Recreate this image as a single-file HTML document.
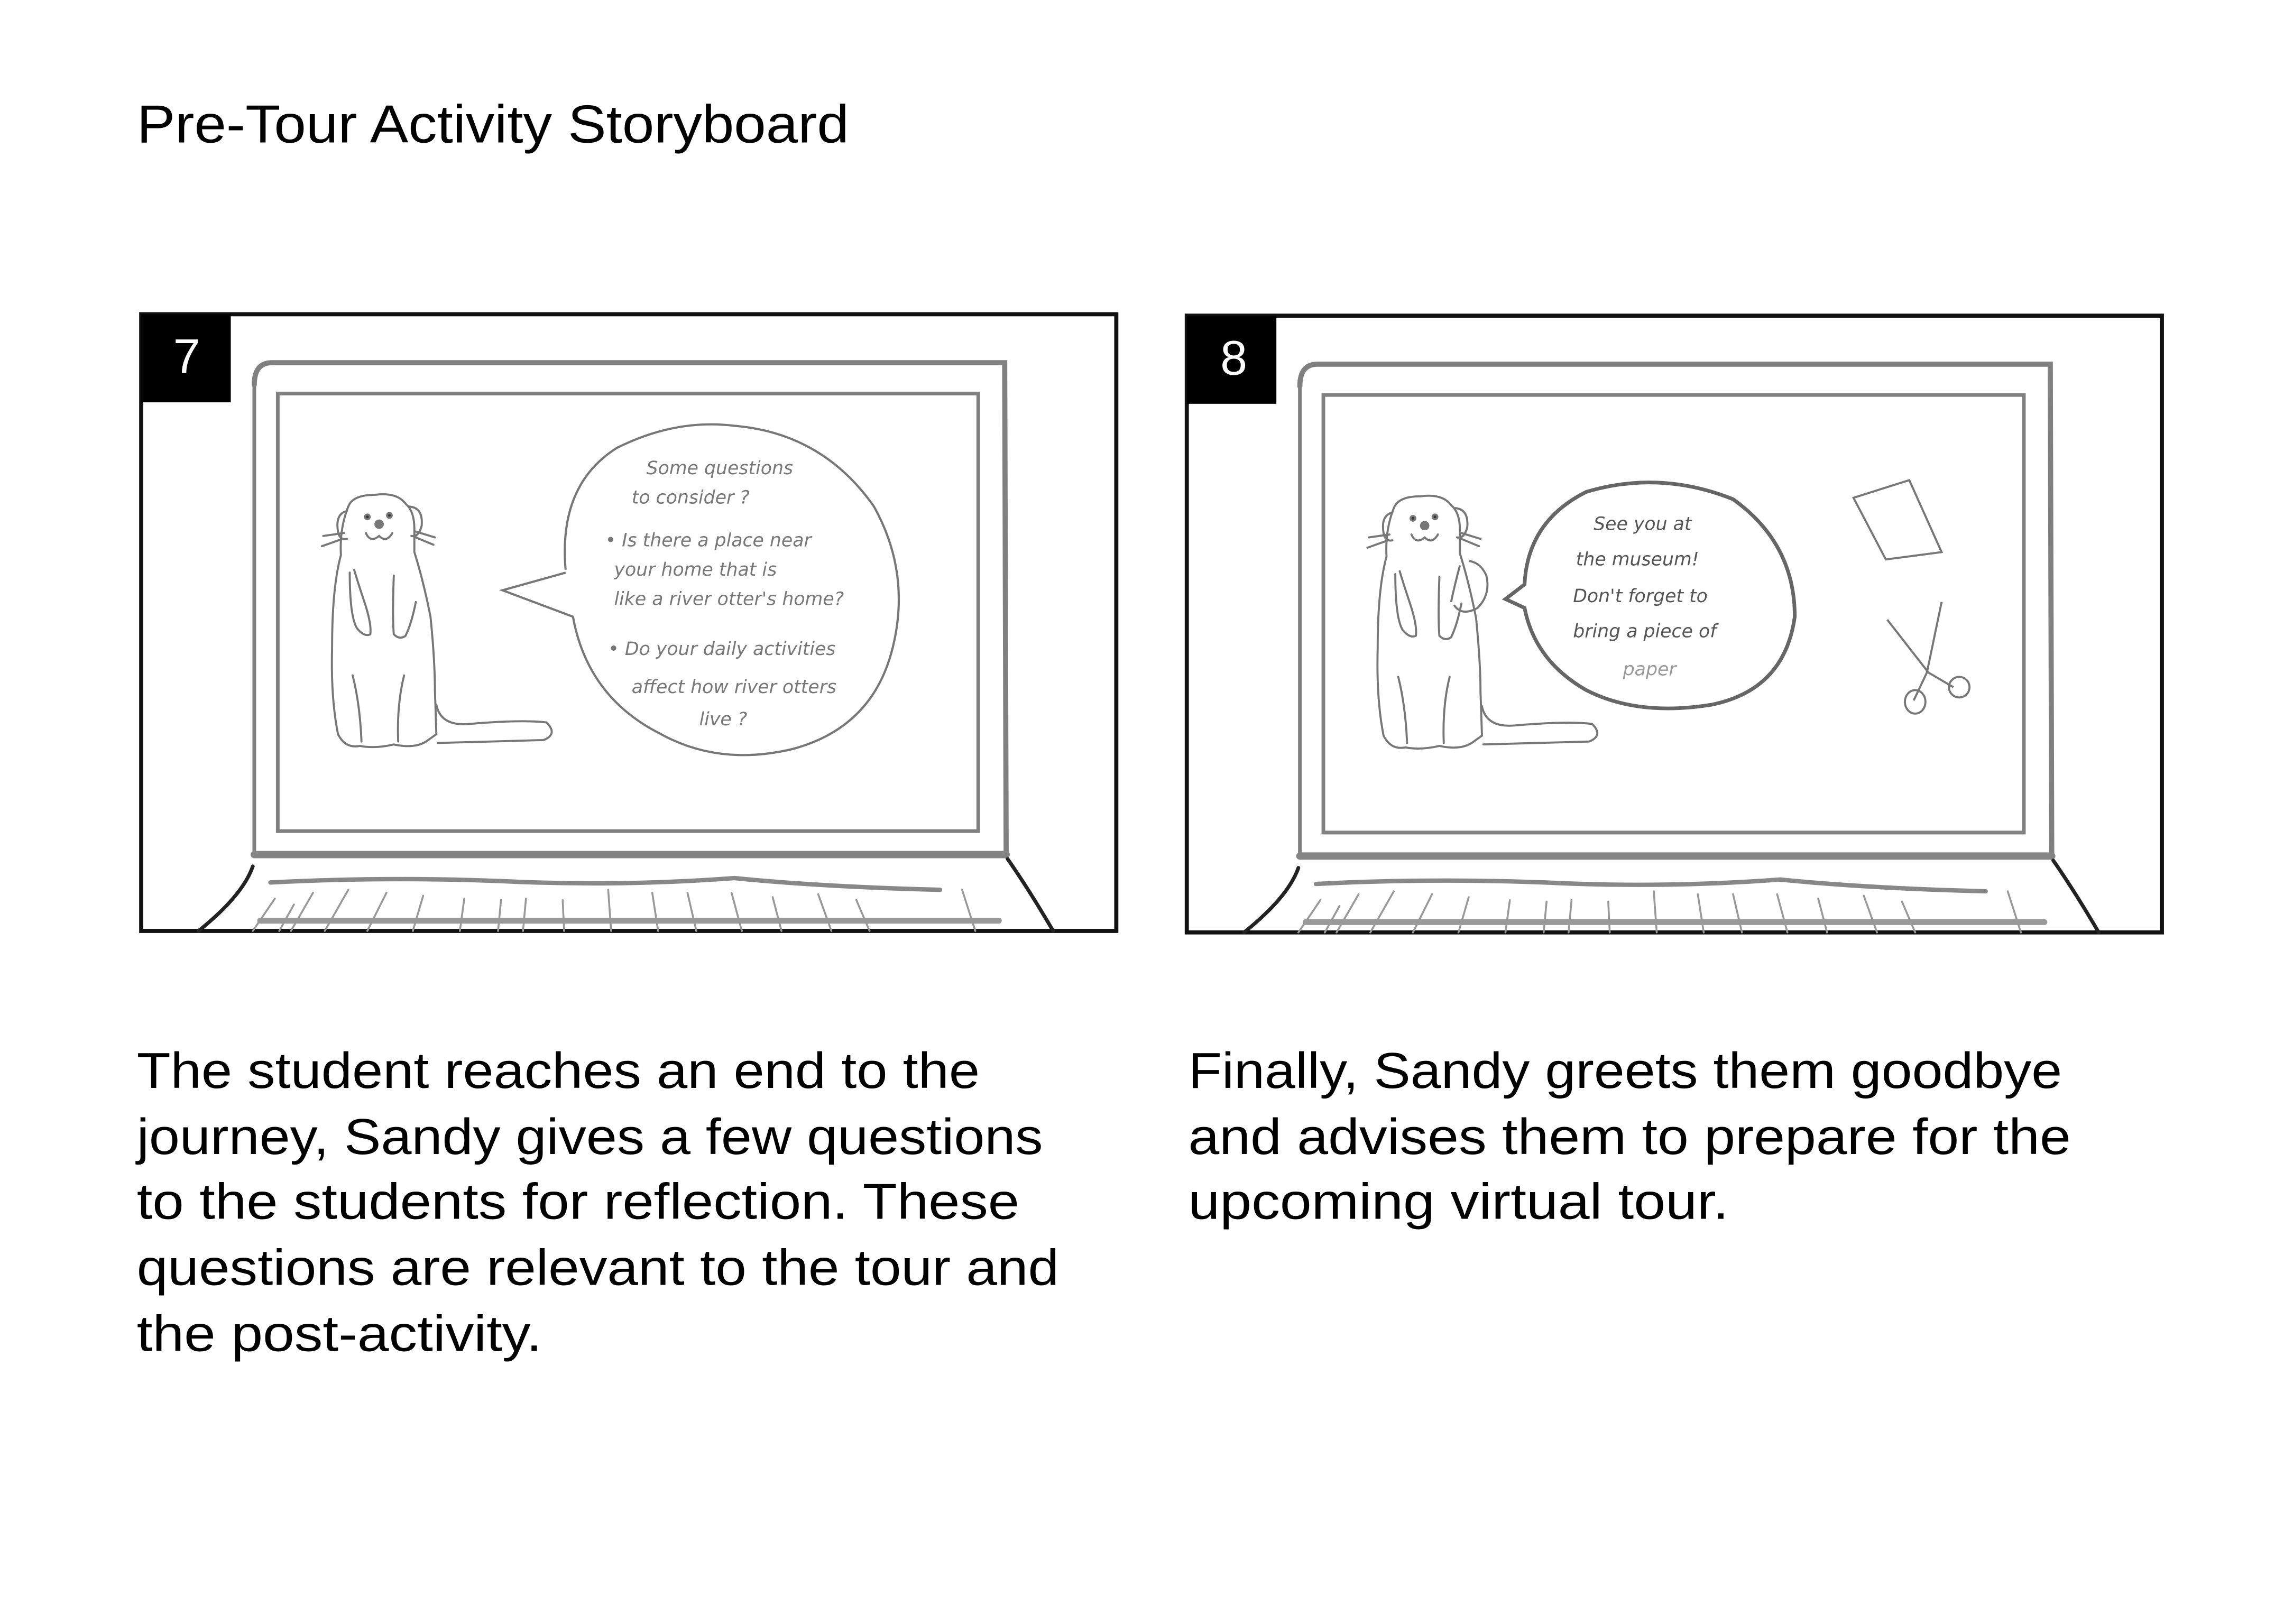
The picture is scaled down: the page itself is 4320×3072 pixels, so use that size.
<!DOCTYPE html>
<html><head><meta charset="utf-8"><style>
html,body{margin:0;padding:0;background:#fff;}
svg{display:block;}
</style></head><body>
<svg width="4320" height="3072" viewBox="0 0 1555 1106" xmlns="http://www.w3.org/2000/svg">
<defs>
<g id="laptop" fill="none" stroke-linecap="round">
  <path d="M173 262 Q173 247 185 247 L684 247 L685 583" stroke="#808080" stroke-width="3.5"/>
  <path d="M173 262 L173 583" stroke="#808080" stroke-width="2.5"/>
  <path d="M189 268 L666 268 L666 566 L189 566 Z" stroke="#808080" stroke-width="2.5"/>
  <path d="M173 582 L685 582" stroke="#858585" stroke-width="5"/>
  <path d="M172 590 Q165 610 135 634" stroke="#222" stroke-width="2.5"/>
  <path d="M686 585 Q700 605 717 634" stroke="#222" stroke-width="2.5"/>
  <path d="M184 601 Q260 597 340 600 Q420 604 500 598 Q560 604 640 606" stroke="#888" stroke-width="3"/>
  <path d="M177 627 L680 627" stroke="#999" stroke-width="4"/>
  <g stroke="#999" stroke-width="1.3">
    <path d="M187 612 L172 634"/><path d="M200 616 L190 634"/><path d="M213 608 L198 634"/>
    <path d="M237 606 L221 634"/><path d="M263 608 L250 634"/><path d="M288 610 L281 634"/>
    <path d="M316 612 L313 634"/><path d="M341 613 L339 634"/><path d="M358 612 L356 634"/>
    <path d="M383 613 L384 634"/><path d="M414 606 L416 634"/><path d="M444 608 L448 634"/>
    <path d="M468 608 L474 634"/><path d="M498 608 L505 634"/><path d="M526 611 L532 634"/>
    <path d="M557 609 L566 634"/><path d="M583 613 L592 634"/><path d="M655 606 L664 634"/>
  </g>
</g>
<g id="otter" fill="none" stroke="#777" stroke-width="1.4" stroke-linecap="round">
  <path d="M237 345 Q240 337 255 337 Q270 335 276 343 Q282 348 282 360 L282 376 Q288 395 293 420 Q296 450 296 470 L297 500"/>
  <path d="M237 345 Q231 360 232 378 Q226 400 226 440 Q225 475 230 500"/>
  <path d="M236 348 Q228 350 230 362 Q231 368 236 367" /><path d="M279 345 Q288 346 287 358 Q285 366 280 365"/>
  <circle cx="250" cy="352" r="1.6" fill="#333"/><circle cx="265" cy="351" r="1.6" fill="#333"/>
  <circle cx="258" cy="357" r="2.5" fill="#777"/>
  <path d="M249 363 Q252 370 258 365 Q263 370 267 363"/>
  <path d="M234 363 L220 365 M233 367 L219 372 M283 362 L296 366 M283 366 L295 371"/>
  <path d="M238 390 Q238 420 243 428 Q248 434 252 432 Q253 425 248 410 Q243 395 241 388"/>
  <path d="M268 392 Q267 420 268 432 Q272 436 276 433 Q280 425 283 410"/>
  <path d="M230 500 Q235 510 245 508 Q255 510 268 507 Q282 510 290 505 L297 500"/>
  <path d="M240 460 Q245 480 246 505 M275 460 Q270 480 271 505"/>
  <path d="M297 480 Q300 495 320 493 Q355 490 372 492 Q380 500 370 504 L298 506"/>
</g>
</defs>

<text x="93" y="97" font-family="Liberation Sans, sans-serif" font-size="36.5" fill="#000" textLength="485" lengthAdjust="spacingAndGlyphs">Pre-Tour Activity Storyboard</text>

<!-- Panel 7 -->
<rect x="96" y="214" width="664" height="420" fill="#fff" stroke="#111" stroke-width="2.8"/>
<use href="#laptop"/>
<use href="#otter"/>
<g fill="none" stroke="#777" stroke-width="1.5">
<path d="M385 388 Q380 330 420 305 Q460 285 500 290 Q560 295 595 345 Q620 390 608 440 Q595 495 540 510 Q490 522 450 500 Q400 475 390 420 L342 402 L385 390"/>
</g>
<g font-family="DejaVu Sans, sans-serif" font-size="12.5" fill="#777" font-style="italic">
<text x="440" y="323">Some questions</text>
<text x="430" y="343">to consider ?</text>
<text x="412" y="372">• Is there a place near</text>
<text x="418" y="392">your home that is</text>
<text x="418" y="412">like a river otter's home?</text>
<text x="414" y="446">• Do your daily activities</text>
<text x="430" y="472">affect how river otters</text>
<text x="476" y="494">live ?</text>
</g>
<rect x="96" y="214" width="61" height="60" fill="#000"/>
<text x="127" y="254" font-family="Liberation Sans, sans-serif" font-size="33" fill="#fff" text-anchor="middle">7</text>

<!-- Panel 8 -->
<rect x="808" y="215" width="664" height="420" fill="#fff" stroke="#111" stroke-width="2.8"/>
<g transform="translate(712,1)"><use href="#laptop"/><use href="#otter"/>
<path d="M994 385 Q990 400 988 410" transform="translate(-712,-1)" fill="none" stroke="#777" stroke-width="1.4"/>
</g>
<path d="M1000 382 Q1008 383 1012 392 Q1015 405 1006 414 Q995 420 990 412" fill="none" stroke="#777" stroke-width="1.4"/>
<path d="M1038 398 Q1040 355 1080 335 Q1130 320 1180 340 Q1222 370 1222 420 Q1215 470 1165 480 Q1115 488 1080 470 Q1045 450 1038 414 L1025 408 Z" fill="none" stroke="#666" stroke-width="2.5"/>
<g font-family="DejaVu Sans, sans-serif" font-size="12.5" fill="#555" font-style="italic">
<text x="1085" y="361">See you at</text>
<text x="1073" y="385">the museum!</text>
<text x="1071" y="410">Don't forget to</text>
<text x="1071" y="434">bring a piece of</text>
<text x="1105" y="460" fill="#999">paper</text>
</g>
<path d="M1262 339 L1300 327 L1322 376 L1284 381 Z" fill="none" stroke="#777" stroke-width="1.4"/>
<g fill="none" stroke="#777" stroke-width="1.4">
<path d="M1285 422 L1313 458 M1322 410 L1312 458 L1303 477 M1313 458 L1330 468"/>
<ellipse cx="1304" cy="478" rx="7" ry="8"/><ellipse cx="1334" cy="468" rx="7" ry="7"/>
</g>
<rect x="808" y="215" width="61" height="60" fill="#000"/>
<text x="840" y="255" font-family="Liberation Sans, sans-serif" font-size="33" fill="#fff" text-anchor="middle">8</text>

<g font-family="Liberation Sans, sans-serif" font-size="34.5" fill="#000">
<text x="93" y="741" textLength="574" lengthAdjust="spacingAndGlyphs">The student reaches an end to the</text>
<text x="93" y="786" textLength="617" lengthAdjust="spacingAndGlyphs">journey, Sandy gives a few questions</text>
<text x="93" y="830" textLength="601" lengthAdjust="spacingAndGlyphs">to the students for reflection. These</text>
<text x="93" y="875" textLength="628" lengthAdjust="spacingAndGlyphs">questions are relevant to the tour and</text>
<text x="93" y="920" textLength="276" lengthAdjust="spacingAndGlyphs">the post-activity.</text>
<text x="809" y="741" textLength="595" lengthAdjust="spacingAndGlyphs">Finally, Sandy greets them goodbye</text>
<text x="809" y="786" textLength="601" lengthAdjust="spacingAndGlyphs">and advises them to prepare for the</text>
<text x="809" y="830" textLength="368" lengthAdjust="spacingAndGlyphs">upcoming virtual tour.</text>
</g>
</svg>
</body></html>
